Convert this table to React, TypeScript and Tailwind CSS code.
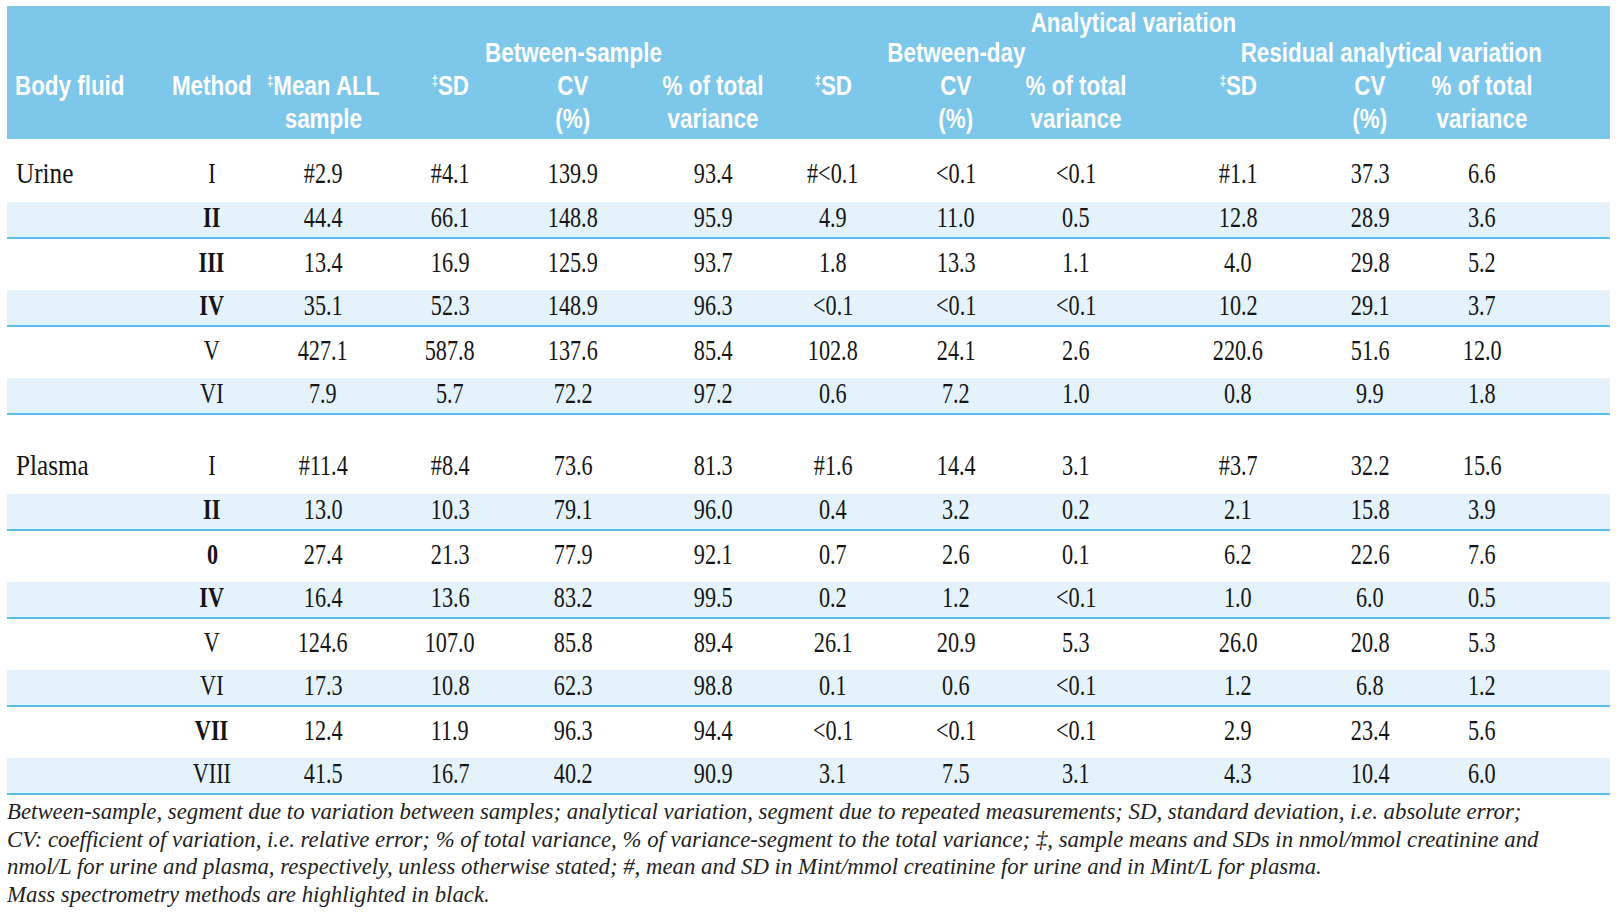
import React from "react";

const COLS =
  "grid grid-cols-[168px_74px_148px_106px_140px_140px_100px_146px_94px_230px_34px_190px_33px]";

type Row = [string, string, boolean, ...string[]];

const urine: Row[] = [
  ["Urine", "I", false, "#2.9", "#4.1", "139.9", "93.4", "#<0.1", "<0.1", "<0.1", "#1.1", "37.3", "6.6"],
  ["", "II", true, "44.4", "66.1", "148.8", "95.9", "4.9", "11.0", "0.5", "12.8", "28.9", "3.6"],
  ["", "III", true, "13.4", "16.9", "125.9", "93.7", "1.8", "13.3", "1.1", "4.0", "29.8", "5.2"],
  ["", "IV", true, "35.1", "52.3", "148.9", "96.3", "<0.1", "<0.1", "<0.1", "10.2", "29.1", "3.7"],
  ["", "V", false, "427.1", "587.8", "137.6", "85.4", "102.8", "24.1", "2.6", "220.6", "51.6", "12.0"],
  ["", "VI", false, "7.9", "5.7", "72.2", "97.2", "0.6", "7.2", "1.0", "0.8", "9.9", "1.8"],
];

const plasma: Row[] = [
  ["Plasma", "I", false, "#11.4", "#8.4", "73.6", "81.3", "#1.6", "14.4", "3.1", "#3.7", "32.2", "15.6"],
  ["", "II", true, "13.0", "10.3", "79.1", "96.0", "0.4", "3.2", "0.2", "2.1", "15.8", "3.9"],
  ["", "0", true, "27.4", "21.3", "77.9", "92.1", "0.7", "2.6", "0.1", "6.2", "22.6", "7.6"],
  ["", "IV", true, "16.4", "13.6", "83.2", "99.5", "0.2", "1.2", "<0.1", "1.0", "6.0", "0.5"],
  ["", "V", false, "124.6", "107.0", "85.8", "89.4", "26.1", "20.9", "5.3", "26.0", "20.8", "5.3"],
  ["", "VI", false, "17.3", "10.8", "62.3", "98.8", "0.1", "0.6", "<0.1", "1.2", "6.8", "1.2"],
  ["", "VII", true, "12.4", "11.9", "96.3", "94.4", "<0.1", "<0.1", "<0.1", "2.9", "23.4", "5.6"],
  ["", "VIII", false, "41.5", "16.7", "40.2", "90.9", "3.1", "7.5", "3.1", "4.3", "10.4", "6.0"],
];

// header label, squeezed to look like a condensed bold face
function H({ children, className = "" }: { children: React.ReactNode; className?: string }) {
  return (
    <div className={`flex justify-center whitespace-nowrap ${className}`}>
      <span className="inline-block scale-x-80 text-center">{children}</span>
    </div>
  );
}

// second line of a two-line header label
function L2({ children }: { children: React.ReactNode }) {
  return <span className="block pt-[2px]">{children}</span>;
}

function Dag() {
  return <span className="relative -top-[9px] text-[14px] leading-none">‡</span>;
}

function Header() {
  return (
    <div
      className={`${COLS} grid-rows-[30px_33px_27px_31px] bg-[#7dc7eb] pt-[1px] pb-[11px] text-[28px] leading-[31px] font-bold text-white`}
      style={{ fontFamily: '"Liberation Sans", Arial, sans-serif' }}
    >
      <H className="col-start-7 col-span-6 row-start-1 pr-[94px]">Analytical variation</H>

      <H className="col-start-5 row-start-2">Between-sample</H>
      <H className="col-start-8 row-start-2">Between-day</H>
      <H className="col-start-10 col-span-3 row-start-2 pl-[82px]">Residual analytical variation</H>

      <div className="col-start-1 row-start-3 pl-[8px] whitespace-nowrap">
        <span className="inline-block origin-left scale-x-80">Body fluid</span>
      </div>
      <H className="col-start-2 row-start-3">Method</H>
      <H className="col-start-3 row-start-3 row-span-2">
        <Dag />Mean ALL
        <L2>sample</L2>
      </H>

      <H className="col-start-4 row-start-3"><Dag />SD</H>
      <H className="col-start-5 row-start-3 row-span-2">CV<L2>(%)</L2></H>
      <H className="col-start-6 row-start-3 row-span-2">% of total<L2>variance</L2></H>

      <H className="col-start-7 row-start-3"><Dag />SD</H>
      <H className="col-start-8 row-start-3 row-span-2">CV<L2>(%)</L2></H>
      <H className="col-start-9 row-start-3 row-span-2">% of total<L2>variance</L2></H>

      <H className="col-start-10 row-start-3"><Dag />SD</H>
      <H className="col-start-11 row-start-3 row-span-2">CV<L2>(%)</L2></H>
      <H className="col-start-12 row-start-3 row-span-2">% of total<L2>variance</L2></H>
    </div>
  );
}

function DataRow({ row, i, group }: { row: Row; i: number; group: "urine" | "plasma" }) {
  const [fluid, method, bold, ...vals] = row;
  let rowCls = "h-[51px] pb-[6px]";
  if (i === 0) rowCls = group === "urine" ? "h-[63px] pt-[4px]" : "h-[79px] pt-[20px]";
  else if (i % 2 === 1) rowCls = "h-[37px] pb-[5px] bg-[#e3f2fb] border-b-2 border-[#56c1ea]";

  return (
    <div className={`${COLS} ${rowCls}`}>
      <div className="flex items-center pl-[9px] whitespace-nowrap">
        <span className="inline-block origin-left scale-x-[0.84]">{fluid}</span>
      </div>
      <div className="flex items-center justify-center whitespace-nowrap">
        <span className={`inline-block scale-x-[0.74] ${bold ? "font-bold" : ""}`}>{method}</span>
      </div>
      {vals.map((v, k) => (
        <div key={k} className="flex items-center justify-center whitespace-nowrap">
          <span className="inline-block scale-x-[0.74]">{v}</span>
        </div>
      ))}
      <div />
    </div>
  );
}

export default function App() {
  return (
    <div className="h-[914px] w-[1620px] overflow-hidden bg-white">
      <div className="ml-[7px] mt-[6px] w-[1603px]">
        <Header />
        <div
          className="text-[30px] leading-[30px] text-[#151515]"
          style={{ fontFamily: '"Liberation Serif", "Times New Roman", serif' }}
        >
          {urine.map((r, i) => (
            <DataRow key={"u" + i} row={r} i={i} group="urine" />
          ))}
          {plasma.map((r, i) => (
            <DataRow key={"p" + i} row={r} i={i} group="plasma" />
          ))}
        </div>
        <div
          className="pt-[3px] text-[24px] leading-[27.7px] italic text-[#222]"
          style={{ fontFamily: '"Liberation Serif", "Times New Roman", serif' }}
        >
          <div className="inline-block origin-left scale-x-95 whitespace-nowrap">
            <div>
              Between-sample, segment due to variation between samples; analytical variation, segment due to
              repeated measurements; SD, standard deviation, i.e. absolute error;
            </div>
            <div>
              CV: coefficient of variation, i.e. relative error; % of total variance, % of variance-segment to the
              total variance; ‡, sample means and SDs in nmol/mmol creatinine and
            </div>
            <div>
              nmol/L for urine and plasma, respectively, unless otherwise stated; #, mean and SD in Mint/mmol
              creatinine for urine and in Mint/L for plasma.
            </div>
            <div>Mass spectrometry methods are highlighted in black.</div>
          </div>
        </div>
      </div>
    </div>
  );
}
